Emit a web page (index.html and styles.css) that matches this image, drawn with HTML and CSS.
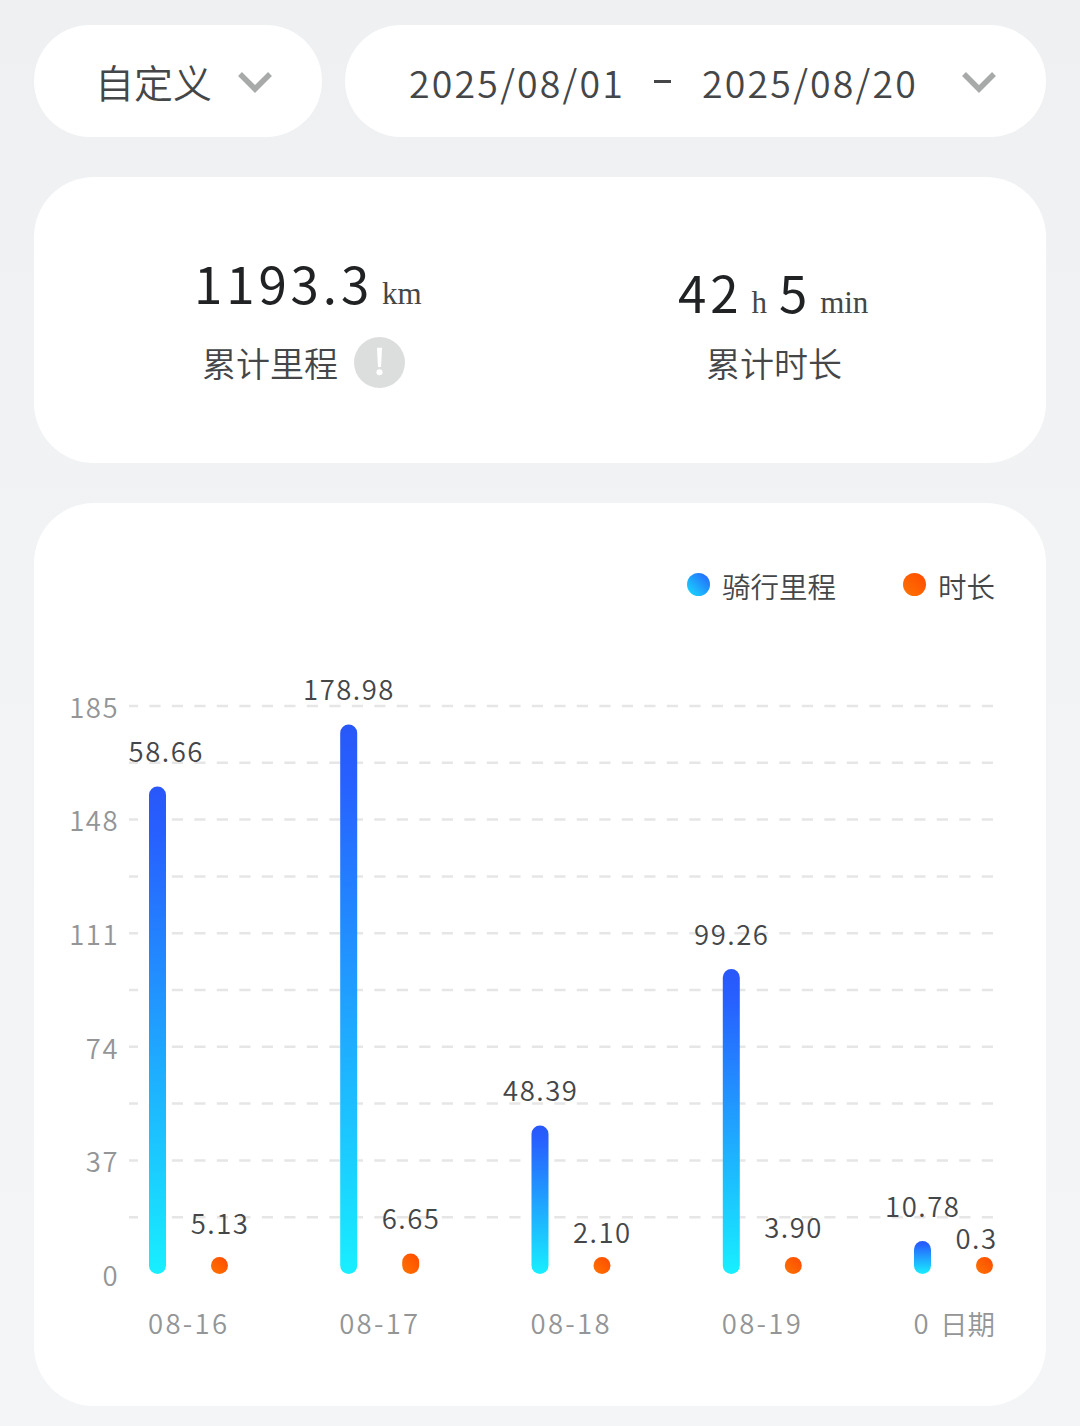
FILE: index.html
```
<!DOCTYPE html>
<html lang="zh-CN">
<head>
    <meta charset="UTF-8">
    <meta name="viewport" content="width=device-width, initial-scale=1.0">
    <title>骑行统计</title>
    <link rel="stylesheet" href="styles.css">
</head>
<body>
    <div class="filters">
        <div class="pill type">
            <span class="type-name">自定义</span>
            <svg class="arrow" viewBox="0 0 34 22"><path d="M2 3 L17 18 L32 3"/></svg>
        </div>
        <div class="pill range">
            <span class="date">2025/08/01</span>
            <span class="dash"></span>
            <span class="date">2025/08/20</span>
            <svg class="arrow" viewBox="0 0 34 22"><path d="M2 3 L17 18 L32 3"/></svg>
        </div>
    </div>

    <div class="card summary">
        <div class="stat mileage">
            <div class="value"><span class="num">1193.3</span><span class="unit">km</span></div>
            <div class="label">
                <span>累计里程</span>
                <svg class="info" viewBox="0 0 50 50">
                    <circle cx="25" cy="25" r="25"/>
                    <path d="M22.500 10.500 h5 l-1 19 h-3 z"/>
                    <circle class="dot" cx="25" cy="34.500" r="3"/>
                </svg>
            </div>
        </div>
        <div class="stat duration">
            <div class="value"><span class="num">42</span><span class="unit">h</span><span class="num">5</span><span class="unit">min</span></div>
            <div class="label"><span>累计时长</span></div>
        </div>
    </div>

    <div class="card chart">
        <div class="legend">
            <span class="item"><i class="dot-blue"></i>骑行里程</span>
            <span class="item"><i class="dot-orange"></i>时长</span>
        </div>
        <svg class="plot" viewBox="34 640 1012 766">
            <defs>
                <linearGradient id="blue" x1="0" y1="0" x2="0" y2="1">
                    <stop offset="0" stop-color="#2957f8"/>
                    <stop offset="0.1" stop-color="#2760ff"/>
                    <stop offset="0.65" stop-color="#1db8ff"/>
                    <stop offset="1" stop-color="#18efff"/>
                </linearGradient>
                <linearGradient id="orange" x1="1" y1="0" x2="0" y2="1">
                    <stop offset="0" stop-color="#ff4a00"/>
                    <stop offset="1" stop-color="#ff7400"/>
                </linearGradient>
            </defs>

            <g class="grid">
                <path d="M129 706H993M129 762.800H993M129 819.600H993M129 876.400H993M129 933.200H993M129 990H993M129 1046.800H993M129 1103.600H993M129 1160.400H993M129 1217.200H993"/>
            </g>

            <g class="axis y-axis">
                <text x="119" y="718">185</text>
                <text x="119" y="831">148</text>
                <text x="119" y="945">111</text>
                <text x="119" y="1059">74</text>
                <text x="119" y="1172">37</text>
                <text x="119" y="1286">0</text>
            </g>

            <g fill="url(#blue)">
                <rect x="149" y="786.500" width="17" height="487.500" rx="8.500"/>
                <rect x="340.200" y="724.500" width="17" height="549.500" rx="8.500"/>
                <rect x="531.500" y="1125.500" width="17" height="148.500" rx="8.500"/>
                <rect x="722.800" y="969" width="17" height="305" rx="8.500"/>
                <rect x="914" y="1241" width="17" height="33" rx="8.500"/>
            </g>
            <g fill="url(#orange)">
                <rect x="211" y="1257" width="17" height="17" rx="8.500"/>
                <rect x="402.200" y="1253.500" width="17" height="20.500" rx="8.500"/>
                <rect x="593.500" y="1257" width="17" height="17" rx="8.500"/>
                <rect x="784.800" y="1257" width="17" height="17" rx="8.500"/>
                <rect x="976" y="1257" width="17" height="17" rx="8.500"/>
            </g>

            <g class="values">
                <text x="166.200" y="762">58.66</text>
                <text x="349" y="700">178.98</text>
                <text x="540.700" y="1101">48.39</text>
                <text x="731.700" y="945">99.26</text>
                <text x="922.700" y="1217">10.78</text>
                <text x="220" y="1234">5.13</text>
                <text x="411" y="1229">6.65</text>
                <text x="602.300" y="1243">2.10</text>
                <text x="793.600" y="1238">3.90</text>
                <text x="976.500" y="1249">0.3</text>
            </g>

            <g class="axis x-axis">
                <text x="148" y="1334">08-16</text>
                <text x="339.200" y="1334">08-17</text>
                <text x="530.500" y="1334">08-18</text>
                <text x="721.800" y="1334">08-19</text>
                <text x="913.500" y="1334">0</text>
                <text class="axis-name" x="940" y="1335">日期</text>
            </g>
        </svg>
    </div>
</body>
</html>
```

FILE: styles.css
```
* {
    box-sizing: border-box;
}
body {
    margin: 0;
    padding: 25px 34px 0;
    min-height: 1426px;
    font-family: "Noto Sans CJK SC DemiLight", "Noto Sans CJK SC", sans-serif;
    font-weight: 350;
    color: #444648;
    background: linear-gradient(#eef0f2, #f1f3f4 40%, #f4f5f7);
}
.filters {
    display: flex;
    gap: 23px;
    height: 112px;
}
.pill {
    display: flex;
    align-items: center;
    background: #fff;
    border-radius: 56px;
}
.type {
    width: 288px;
    padding-left: 61px;
}
.type-name {
    width: 143px;
    font-size: 39px;
}
.range {
    width: 701px;
    padding-left: 64px;
}
.date {
    width: 213px;
    font-size: 37.5px;
    letter-spacing: 2.2px;
    white-space: nowrap;
}
.dash {
    width: 17px;
    height: 3px;
    margin: 0 31px 0 32px;
    background: #444648;
}
.arrow {
    width: 34px;
    height: 22px;
    margin-top: 2px;
    fill: none;
    stroke: #a8aaaa;
    stroke-width: 5.5;
}
.range .arrow {
    margin-left: 47px;
}
.card {
    margin-top: 40px;
    background: #fff;
    border-radius: 60px;
}
.summary {
    display: flex;
    height: 286px;
}
.stat {
    width: 506px;
}
.mileage {
    padding: 77px 0 0 160px;
}
.duration {
    padding: 86px 0 0 138px;
}
.value {
    display: flex;
    align-items: baseline;
    height: 78px;
    line-height: 56px;
}
.duration .value {
    height: 69px;
}
.num {
    font-family: "Noto Sans CJK SC", sans-serif;
    font-size: 51px;
    font-weight: 400;
    letter-spacing: 3.9px;
    color: #202224;
}
.unit {
    margin: 0 12px 0 9px;
    font-family: "Liberation Serif", serif;
    font-size: 31px;
}
.label {
    display: flex;
    align-items: center;
    height: 60px;
    padding-left: 8px;
    font-size: 34px;
}
.duration .label {
    padding-left: 28px;
}
.info {
    width: 51px;
    height: 51px;
    margin-left: 16px;
    fill: #dcdedd;
}
.info path, .info .dot {
    fill: #fff;
}
.chart {
    height: 903px;
}
.legend {
    display: flex;
    justify-content: flex-end;
    gap: 67px;
    height: 137px;
    padding: 62px 51px 0 0;
    font-size: 28.5px;
    line-height: 42px;
}
.item {
    display: flex;
}
.item i {
    width: 23px;
    height: 23px;
    margin: 8px 12px 0 0;
    border-radius: 50%;
}
.dot-blue {
    background: linear-gradient(45deg, #18dfff, #2660fa);
}
.dot-orange {
    background: linear-gradient(45deg, #ff7400, #ff4a00);
}
.plot {
    display: block;
    width: 1012px;
    height: 766px;
}
.grid path {
    fill: none;
    stroke: #e6e6e6;
    stroke-width: 2.5;
    stroke-dasharray: 11.2 11.3;
    stroke-dashoffset: 2.2;
}
.plot text {
    font-size: 27.5px;
    letter-spacing: 1.5px;
}
.values {
    fill: #444648;
    text-anchor: middle;
}
.axis {
    fill: #939597;
}
.y-axis {
    text-anchor: end;
}
.plot .x-axis text {
    letter-spacing: 2.3px;
}
.plot .x-axis .axis-name {
    letter-spacing: 0;
}
```
